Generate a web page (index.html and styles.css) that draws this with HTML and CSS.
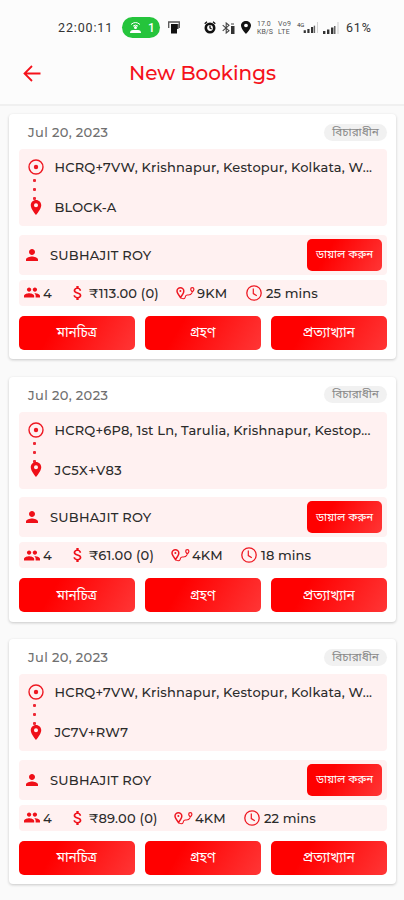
FILE: index.html
```
<!DOCTYPE html>
<html lang="bn">
<head>
<meta charset="utf-8">
<meta name="viewport" content="width=device-width, initial-scale=1">
<title>New Bookings</title>
<link rel="stylesheet" href="styles.css">
</head>
<body>
<svg class="sprite" aria-hidden="true">
  <symbol id="target" viewBox="0 0 16 16"><circle cx="8" cy="8" r="7" fill="none" stroke="currentColor" stroke-width="1.4"/><circle cx="8" cy="8" r="2.2" fill="currentColor"/></symbol>
  <symbol id="pin" viewBox="5 2 14 20"><path fill="currentColor" d="M12 2C8.1 2 5 5.1 5 9c0 5.3 7 13 7 13s7-7.700 7-13c0-3.900-3.100-7-7-7zm0 9.700a2.700 2.700 0 1 1 0-5.400 2.700 2.700 0 0 1 0 5.400z"/></symbol>
  <symbol id="person" viewBox="4 4 16 16"><path fill="currentColor" d="M12 12c2.200 0 4-1.800 4-4s-1.800-4-4-4-4 1.800-4 4 1.800 4 4 4zm0 2c-2.700 0-8 1.300-8 4v2h16v-2c0-2.700-5.300-4-8-4z"/></symbol>
  <symbol id="people" viewBox="1 5 22 14"><path fill="currentColor" d="M16 11c1.660 0 2.990-1.340 2.990-3S17.660 5 16 5s-3 1.340-3 3 1.340 3 3 3zm-8 0c1.660 0 2.990-1.340 2.990-3S9.660 5 8 5 5 6.340 5 8s1.340 3 3 3zm0 2c-2.330 0-7 1.170-7 3.500V19h14v-2.500c0-2.330-4.670-3.500-7-3.500zm8 0c-.29 0-.62.020-.97.050 1.160.84 1.970 1.970 1.970 3.450V19h6v-2.500c0-2.330-4.670-3.500-7-3.500z"/></symbol>
  <symbol id="dollar" viewBox="6 3 11 18"><path fill="currentColor" d="M11.800 10.900c-2.270-.59-3-1.200-3-2.150 0-1.090 1.010-1.850 2.700-1.850 1.780 0 2.440.85 2.500 2.100h2.210c-.07-1.720-1.120-3.300-3.210-3.810V3h-3v2.160c-1.940.42-3.500 1.680-3.500 3.610 0 2.310 1.910 3.460 4.700 4.130 2.500.6 3 1.480 3 2.410 0 .69-.49 1.790-2.700 1.790-2.060 0-2.870-.92-2.980-2.100h-2.200c.12 2.190 1.760 3.420 3.680 3.830V21h3v-2.150c1.950-.37 3.500-1.500 3.500-3.550 0-2.840-2.430-3.810-4.700-4.400z"/></symbol>
  <symbol id="route" viewBox="0 0 19 14"><path fill="none" stroke="currentColor" stroke-width="1.500" d="M4.500 11.500C2.500 9 1 7.200 1 5.100a3.400 3.400 0 0 1 6.800 0c0 1.900-1.300 3.900-3.300 6.400z"/><path fill="none" stroke="currentColor" stroke-width="1.100" d="M4.500 11.500c1.500 1.700 4 1.600 4.500.2.500-2.200.8-2.900 2.300-2.700 1.900.2 3.500.5 4.700-2.200"/><path fill="none" stroke="currentColor" stroke-width="1.200" d="M16.300 6C15.300 5 14.700 4.300 14.700 3.200a1.600 1.600 0 0 1 3.200 0c0 1.100-.6 1.800-1.600 2.800z"/><circle cx="4.400" cy="5" r="1" fill="currentColor"/></symbol>
  <symbol id="clock" viewBox="0 0 16 16"><circle cx="8" cy="8" r="7.200" fill="none" stroke="currentColor" stroke-width="1.300"/><path d="M7.300 3.600v5l3.500 2.200" fill="none" stroke="currentColor" stroke-width="1.200"/></symbol>
  <symbol id="bars" viewBox="0 0 16 12"><path fill="#333" d="M0 9h2.400v3H0zM4 7.500h2.400V12H4zM8 5.500h2.400V12H8z"/><path fill="#666" d="M11 4h1.500v8H11z"/><path fill="#ccc" d="M14.500 0h1v12h-1z"/></symbol>
</svg>

<header class="top">
  <div class="status">
    <span class="time">22:00:11</span>
    <span class="hotspot">
      <svg width="13" height="13" viewBox="0 0 13 13"><g fill="none" stroke="#fff" stroke-width="1"><path d="M2 3.500Q6.500-.5 11 3.500M4 5.200Q6.500 3 9 5.200"/></g><circle cx="6.500" cy="6.500" r="1.500" fill="#fff"/><path fill="#fff" d="M1 12q0-3 3-3h5q3 0 3 3z"/></svg>
      <b>1</b>
    </span>
    <svg class="app" width="12" height="13" viewBox="0 0 12 13"><path d="M.7 7V1h10.600v6" fill="none" stroke="#555" stroke-width="1.300"/><path d="M3 3h6v9.500H3z" fill="#111"/><path d="M9 3h1.500v5H9z" fill="#333"/></svg>
    <svg class="alarm" width="12" height="13" viewBox="0 0 12 13"><circle cx="6" cy="7" r="4.200" fill="none" stroke="#111" stroke-width="2.600"/><path d="M.7 2.700 3 .8m8.300 1.900L9 .8M6 4.500V7l1.600 1" fill="none" stroke="#111" stroke-width="1.300"/></svg>
    <svg class="bt" width="13" height="12" viewBox="0 0 13 12"><path d="M.7 3.200 7 8.700 4.200 11V1L7 3.300.7 8.800" fill="none" stroke="#444" stroke-width="1.100"/><path d="M9 4h3.500v8H9z" fill="#333"/><path d="M9 2h3" stroke="#444"/></svg>
    <svg class="loc" width="10" height="13" viewBox="5 2 14 20" preserveAspectRatio="none"><path fill="#111" d="M12 2C8.100 2 5 5.100 5 9c0 5.300 7 13 7 13s7-7.700 7-13c0-3.900-3.100-7-7-7zm0 9.700a2.700 2.700 0 1 1 0-5.400 2.700 2.700 0 0 1 0 5.400z"/></svg>
    <span class="tiny speed">17.0<br>KB/S</span>
    <span class="tiny volte">Vo9<br>LTE</span>
    <span class="cell"><i>4G</i><svg width="16" height="11"><use href="#bars"/></svg></span>
    <svg class="cell2" width="16" height="12"><use href="#bars"/></svg>
    <span class="battery">61%</span>
  </div>
  <div class="titlebar">
    <svg class="back" width="18" height="17" viewBox="0 0 18 17"><path d="M17.500 8.500H1.500M9 1 1.500 8.500 9 16" fill="none" stroke="currentColor" stroke-width="1.800"/></svg>
    <h1>New Bookings</h1>
  </div>
</header>

<main class="list">
  <article class="card">
    <div class="head"><time>Jul 20, 2023</time><span class="badge">বিচারাধীন</span></div>
    <div class="route">
      <div class="stop"><svg class="i-target"><use href="#target"/></svg><span class="addr">HCRQ+7VW, Krishnapur, Kestopur, Kolkata, W...</span></div>
      <div class="dots"><i></i><i></i><i></i></div>
      <div class="stop"><svg class="i-pin"><use href="#pin"/></svg><span class="addr">BLOCK-A</span></div>
    </div>
    <div class="driver"><svg class="i-person"><use href="#person"/></svg><span class="name">SUBHAJIT ROY</span><button class="btn call">ডায়াল করুন</button></div>
    <div class="stats">
      <svg class="i-people"><use href="#people"/></svg><span class="seats">4</span>
      <svg class="i-dollar"><use href="#dollar"/></svg><span class="fare f1">₹113.00 (0)</span>
      <svg class="i-route"><use href="#route"/></svg><span class="km">9KM</span>
      <svg class="i-clock"><use href="#clock"/></svg><span class="mins">25 mins</span>
    </div>
    <div class="actions"><button class="btn">মানচিত্র</button><button class="btn">গ্রহণ</button><button class="btn">প্রত্যাখ্যান</button></div>
  </article>

  <article class="card">
    <div class="head"><time>Jul 20, 2023</time><span class="badge">বিচারাধীন</span></div>
    <div class="route">
      <div class="stop"><svg class="i-target"><use href="#target"/></svg><span class="addr">HCRQ+6P8, 1st Ln, Tarulia, Krishnapur, Kestop...</span></div>
      <div class="dots"><i></i><i></i><i></i></div>
      <div class="stop"><svg class="i-pin"><use href="#pin"/></svg><span class="addr wide">JC5X+V83</span></div>
    </div>
    <div class="driver"><svg class="i-person"><use href="#person"/></svg><span class="name">SUBHAJIT ROY</span><button class="btn call">ডায়াল করুন</button></div>
    <div class="stats">
      <svg class="i-people"><use href="#people"/></svg><span class="seats">4</span>
      <svg class="i-dollar"><use href="#dollar"/></svg><span class="fare f2">₹61.00 (0)</span>
      <svg class="i-route"><use href="#route"/></svg><span class="km">4KM</span>
      <svg class="i-clock"><use href="#clock"/></svg><span class="mins">18 mins</span>
    </div>
    <div class="actions"><button class="btn">মানচিত্র</button><button class="btn">গ্রহণ</button><button class="btn">প্রত্যাখ্যান</button></div>
  </article>

  <article class="card">
    <div class="head"><time>Jul 20, 2023</time><span class="badge">বিচারাধীন</span></div>
    <div class="route">
      <div class="stop"><svg class="i-target"><use href="#target"/></svg><span class="addr">HCRQ+7VW, Krishnapur, Kestopur, Kolkata, W...</span></div>
      <div class="dots"><i></i><i></i><i></i></div>
      <div class="stop"><svg class="i-pin"><use href="#pin"/></svg><span class="addr">JC7V+RW7</span></div>
    </div>
    <div class="driver"><svg class="i-person"><use href="#person"/></svg><span class="name">SUBHAJIT ROY</span><button class="btn call">ডায়াল করুন</button></div>
    <div class="stats">
      <svg class="i-people"><use href="#people"/></svg><span class="seats">4</span>
      <svg class="i-dollar"><use href="#dollar"/></svg><span class="fare f3">₹89.00 (0)</span>
      <svg class="i-route"><use href="#route"/></svg><span class="km">4KM</span>
      <svg class="i-clock"><use href="#clock"/></svg><span class="mins">22 mins</span>
    </div>
    <div class="actions"><button class="btn">মানচিত্র</button><button class="btn">গ্রহণ</button><button class="btn">প্রত্যাখ্যান</button></div>
  </article>
</main>
</body>
</html>
```
FILE: styles.css
```
* { box-sizing: border-box; }
body {
  margin: 0;
  height: 900px;
  overflow: hidden;
  background: #fafafa;
  color: #222;
  font-family: Montserrat, Inter, "Noto Sans Bengali", "Noto Sans", sans-serif;
  font-size: 13px;
  font-weight: 500;
}
svg { flex: none; display: block; }
.sprite { position: absolute; width: 0; height: 0; }

.top { height: 106px; border-bottom: 2px solid #f0f0f0; background: #fcfcfc; }
.status { display: flex; align-items: center; height: 55px; padding-left: 58px; color: #333; white-space: nowrap; }
.time { width: 64px; font: 12.5px Roboto, sans-serif; letter-spacing: .85px; }
.hotspot { display: flex; align-items: center; gap: 6px; width: 38px; height: 21px; padding-left: 7px; border-radius: 11px; background: #25c43c; color: #fff; }
.hotspot b { font: 500 12px Roboto, sans-serif; }
.app { margin-left: 8px; }
.alarm { margin-left: 24px; }
.bt { margin-left: 6px; }
.loc { margin-left: 6px; }
.tiny { font: 7px/8px Roboto, sans-serif; color: #555; }
.speed { margin-left: 6px; width: 21px; }
.volte { width: 19px; letter-spacing: .4px; }
.cell { display: flex; align-items: flex-end; width: 26px; }
.cell i { align-self: flex-start; width: 6px; font: 6px/6px Roboto, sans-serif; }
.battery { margin-left: 7px; font: 12.5px Roboto, sans-serif; letter-spacing: .8px; }

.titlebar { display: flex; align-items: center; height: 36px; padding-left: 23px; color: #f5121b; }
h1 { margin: 0 0 0 88px; font-size: 20px; font-weight: 500; line-height: 26px; letter-spacing: -.05px; white-space: nowrap; }

.list { display: flex; flex-direction: column; gap: 17.5px; padding: 8px 8px 0 9px; }
.card { height: 245px; padding: 9px 9px 9px 9.5px; border-radius: 4px; background: #fff; box-shadow: 0 1px 3px rgba(0,0,0,.2); }
.head { display: flex; align-items: center; justify-content: space-between; height: 18px; margin-bottom: 8px; padding-left: 9.500px; color: #707070; }
time { letter-spacing: .35px; }
.badge { width: 63px; height: 17px; border-radius: 9px; background: #f1f1f1; color: #888; font-size: 11.700px; font-weight: 400; line-height: 17px; text-align: center; }

.route, .driver, .stats { border-radius: 4px; background: #fff1f1; color: #2b2b2b; }
.route { height: 77px; padding: 8px 0 0 9px; }
.stop { display: flex; align-items: center; height: 20px; }
.addr { white-space: nowrap; letter-spacing: .17px; }
.addr.wide { letter-spacing: .5px; }
.i-target { width: 16px; height: 16px; margin-right: 11px; color: #ee1822; }
.i-pin { width: 12px; height: 15px; margin: 0 13px 0 2px; color: #ef1019; }
.dots { display: flex; flex-direction: column; gap: 6px; height: 20px; padding: 2px 0 0 5px; }
.dots i { flex: none; width: 3px; height: 3px; border-radius: 1px; background: #ee2835; }

.driver { display: flex; align-items: center; height: 40px; margin-top: 8.5px; padding: 0 5px 0 7.5px; }
.i-person { width: 12px; height: 12px; margin-right: 12px; color: #ef1019; }
.name { letter-spacing: .23px; white-space: nowrap; }
.btn { display: block; height: 34px; border: 0; border-radius: 5px; padding: 2px 0 0; background: linear-gradient(120deg, #ff0000 30%, #ff3636); color: #fff; font: 13.700px "Noto Sans Bengali", "Noto Sans", sans-serif; white-space: nowrap; }
.call { width: 75px; height: 32px; margin-left: auto; padding-top: 2px; font-size: 11.300px; }

.stats { display: flex; align-items: center; height: 26px; margin-top: 5px; padding-left: 5.500px; white-space: nowrap; }
.i-people { width: 16px; height: 11px; margin-right: 3px; color: #ef1019; }
.seats { width: 30px; }
.i-dollar { width: 9px; height: 14px; margin-right: 7px; color: #ef1019; }
.fare { letter-spacing: .2px; }
.f1 { width: 87px; }
.f2 { width: 82px; }
.f3 { width: 85px; }
.i-route { width: 19px; height: 14px; margin-right: 2px; color: #ee1822; }
.km { width: 49px; letter-spacing: .15px; }
.i-clock { width: 16px; height: 16px; margin-right: 4px; color: #ee1822; }
.mins { letter-spacing: .1px; }
.actions { display: grid; grid-template-columns: repeat(3, 1fr); gap: 9.500px; margin-top: 10px; }
```
